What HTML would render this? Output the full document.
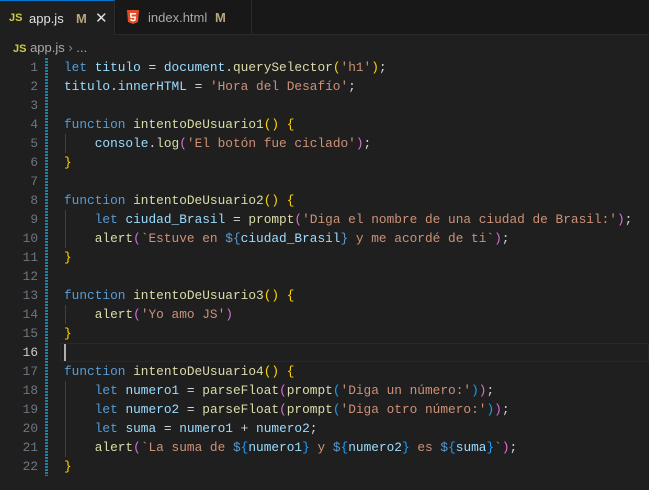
<!DOCTYPE html>
<html><head><meta charset="utf-8"><style>
body{margin:0;width:649px;height:490px;background:#1f1f1f;overflow:hidden;font-family:"Liberation Sans",sans-serif;}
.tabs{height:35px;background:#181818;position:relative;border-bottom:1px solid #2b2b2b;box-sizing:border-box}
.tab{position:absolute;top:0;height:35px;font-size:13px;line-height:35px;box-sizing:border-box}
.t1{left:0;width:115px;background:#1f1f1f;border-top:1px solid #0078d4;color:#e0e0e0;border-right:1px solid #2b2b2b}
.t2{left:115px;width:137px;color:#a8a8a8;border-right:1px solid #2b2b2b}
.js{color:#cbcb41;font-weight:bold;font-size:11px}
.m{color:#b8a57a;font-weight:bold}
.bc{position:absolute;top:38px;left:13px;font-size:13px;color:#a9a9a9;height:20px;line-height:20px}
.ed{position:absolute;top:58px;left:0;right:0;font-family:"Liberation Mono",monospace;font-size:12.8px;color:#d4d4d4}
.l{height:19px;line-height:19px;position:relative;white-space:pre}
.n{position:absolute;left:0;width:38px;text-align:right;color:#6e7681}
.c{position:absolute;left:64px}
.gut{position:absolute;left:45px;width:3px;top:58px;height:418px;background:repeating-linear-gradient(to bottom,#1b81a8 0 2px,#1f1f1f 2px 3px)}
.ig{position:absolute;left:65px;width:1px;background:#404040}
.k{color:#569cd6}.v{color:#9cdcfe}.f{color:#dcdcaa}.s{color:#ce9178}.g{color:#ffd700}.p{color:#da70d6}.b{color:#179fff}
</style></head><body>
<div class="tabs">
<div class="tab t1"><span class="js" style="position:absolute;left:9px">JS</span><span style="position:absolute;left:29px">app.js</span><span class="m" style="position:absolute;left:76px">M</span><span style="position:absolute;left:95px;color:#ddd;font-size:15px">✕</span></div>
<div class="tab t2"><svg style="position:absolute;left:12px;top:10px" width="12" height="14" viewBox="0 0 12 14"><path d="M0 0h12l-1 12-5 2-5-2z" fill="#e44d26"/><path d="M3 3h6v1.5H4.5l.2 2H9l-.4 4L6 11.5 3.4 10.5l-.1-1.6h1.4l.1.6L6 10l1.2-.5.2-1.6H3.3z" fill="#fff"/></svg><span style="position:absolute;left:33px">index.html</span><span class="m" style="position:absolute;left:100px">M</span></div>
</div>
<div class="bc"><span class="js">JS</span> app.js <span style="color:#888">›</span> ...</div>
<div class="gut"></div>
<div class="ig" style="top:134px;height:19px"></div>
<div class="ig" style="top:210px;height:38px"></div>
<div class="ig" style="top:305px;height:19px"></div>
<div class="ig" style="top:381px;height:76px"></div>
<div style="position:absolute;left:60px;right:0;top:343px;height:19px;box-sizing:border-box;border:1px solid #282828"></div>
<div style="position:absolute;left:64px;top:344px;width:2px;height:17px;background:#aeafad"></div>
<div class="ed">
<div class="l"><span class="n">1</span><span class="c"><span class="k">let</span> <span class="v">titulo</span> = <span class="v">document</span>.<span class="f">querySelector</span><span class="g">(</span><span class="s">'h1'</span><span class="g">)</span>;</span></div>
<div class="l"><span class="n">2</span><span class="c"><span class="v">titulo</span>.<span class="v">innerHTML</span> = <span class="s">'Hora del Desafío'</span>;</span></div>
<div class="l"><span class="n">3</span></div>
<div class="l"><span class="n">4</span><span class="c"><span class="k">function</span> <span class="f">intentoDeUsuario1</span><span class="g">()</span> <span class="g">{</span></span></div>
<div class="l"><span class="n">5</span><span class="c">    <span class="v">console</span>.<span class="f">log</span><span class="p">(</span><span class="s">'El botón fue ciclado'</span><span class="p">)</span>;</span></div>
<div class="l"><span class="n">6</span><span class="c"><span class="g">}</span></span></div>
<div class="l"><span class="n">7</span></div>
<div class="l"><span class="n">8</span><span class="c"><span class="k">function</span> <span class="f">intentoDeUsuario2</span><span class="g">()</span> <span class="g">{</span></span></div>
<div class="l"><span class="n">9</span><span class="c">    <span class="k">let</span> <span class="v">ciudad_Brasil</span> = <span class="f">prompt</span><span class="p">(</span><span class="s">'Diga el nombre de una ciudad de Brasil:'</span><span class="p">)</span>;</span></div>
<div class="l"><span class="n">10</span><span class="c">    <span class="f">alert</span><span class="p">(</span><span class="s">`Estuve en </span><span class="k">${</span><span class="v">ciudad_Brasil</span><span class="k">}</span><span class="s"> y me acordé de ti`</span><span class="p">)</span>;</span></div>
<div class="l"><span class="n">11</span><span class="c"><span class="g">}</span></span></div>
<div class="l"><span class="n">12</span></div>
<div class="l"><span class="n">13</span><span class="c"><span class="k">function</span> <span class="f">intentoDeUsuario3</span><span class="g">()</span> <span class="g">{</span></span></div>
<div class="l"><span class="n">14</span><span class="c">    <span class="f">alert</span><span class="p">(</span><span class="s">'Yo amo JS'</span><span class="p">)</span></span></div>
<div class="l"><span class="n">15</span><span class="c"><span class="g">}</span></span></div>
<div class="l"><span class="n" style="color:#ccc">16</span></div>
<div class="l"><span class="n">17</span><span class="c"><span class="k">function</span> <span class="f">intentoDeUsuario4</span><span class="g">()</span> <span class="g">{</span></span></div>
<div class="l"><span class="n">18</span><span class="c">    <span class="k">let</span> <span class="v">numero1</span> = <span class="f">parseFloat</span><span class="p">(</span><span class="f">prompt</span><span class="b">(</span><span class="s">'Diga un número:'</span><span class="b">)</span><span class="p">)</span>;</span></div>
<div class="l"><span class="n">19</span><span class="c">    <span class="k">let</span> <span class="v">numero2</span> = <span class="f">parseFloat</span><span class="p">(</span><span class="f">prompt</span><span class="b">(</span><span class="s">'Diga otro número:'</span><span class="b">)</span><span class="p">)</span>;</span></div>
<div class="l"><span class="n">20</span><span class="c">    <span class="k">let</span> <span class="v">suma</span> = <span class="v">numero1</span> + <span class="v">numero2</span>;</span></div>
<div class="l"><span class="n">21</span><span class="c">    <span class="f">alert</span><span class="p">(</span><span class="s">`La suma de </span><span class="k">$</span><span class="b">{</span><span class="v">numero1</span><span class="b">}</span><span class="s"> y </span><span class="k">$</span><span class="b">{</span><span class="v">numero2</span><span class="b">}</span><span class="s"> es </span><span class="k">$</span><span class="b">{</span><span class="v">suma</span><span class="b">}</span><span class="s">`</span><span class="p">)</span>;</span></div>
<div class="l"><span class="n">22</span><span class="c"><span class="g">}</span></span></div>
</div>
</body></html>
